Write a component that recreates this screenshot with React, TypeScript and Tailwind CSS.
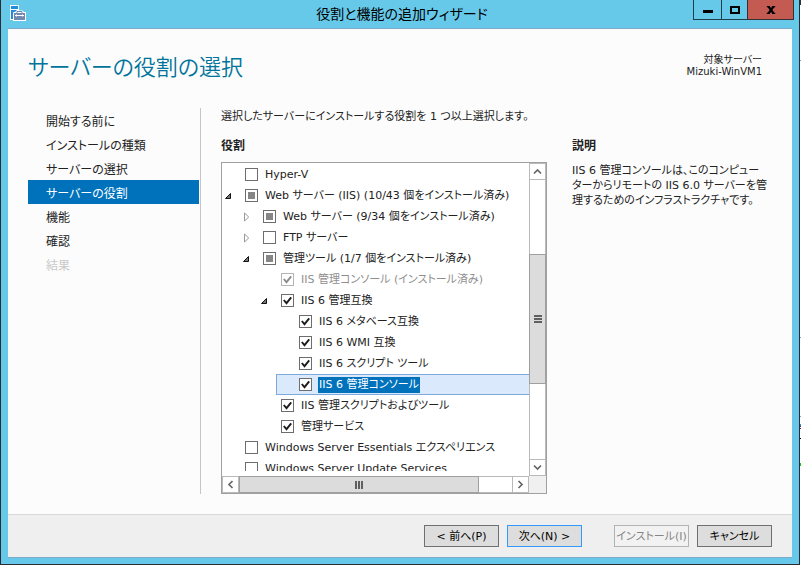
import { ReactNode } from "react";
import { clsx } from "clsx";

type CheckState = "on" | "off" | "partial";

interface Role {
  id: string;
  label: string;
  state: CheckState;
  open?: boolean;
  disabled?: boolean;
  selected?: boolean;
  children?: Role[];
}

const steps = [
  { label: "開始する前に" },
  { label: "インストールの種類" },
  { label: "サーバーの選択" },
  { label: "サーバーの役割", active: true },
  { label: "機能" },
  { label: "確認" },
  { label: "結果", disabled: true },
];

const roles: Role[] = [
  { id: "hyper-v", label: "Hyper-V", state: "off" },
  {
    id: "iis",
    label: "Web サーバー (IIS) (10/43 個をインストール済み)",
    state: "partial",
    open: true,
    children: [
      { id: "web", label: "Web サーバー (9/34 個をインストール済み)", state: "partial", open: false },
      { id: "ftp", label: "FTP サーバー", state: "off", open: false },
      {
        id: "tools",
        label: "管理ツール (1/7 個をインストール済み)",
        state: "partial",
        open: true,
        children: [
          { id: "console", label: "IIS 管理コンソール (インストール済み)", state: "on", disabled: true },
          {
            id: "iis6",
            label: "IIS 6 管理互換",
            state: "on",
            open: true,
            children: [
              { id: "metabase", label: "IIS 6 メタベース互換", state: "on" },
              { id: "wmi", label: "IIS 6 WMI 互換", state: "on" },
              { id: "script", label: "IIS 6 スクリプト ツール", state: "on" },
              { id: "iis6-console", label: "IIS 6 管理コンソール", state: "on", selected: true },
            ],
          },
          { id: "script-tools", label: "IIS 管理スクリプトおよびツール", state: "on" },
          { id: "service", label: "管理サービス", state: "on" },
        ],
      },
    ],
  },
  { id: "essentials", label: "Windows Server Essentials エクスペリエンス", state: "off" },
  { id: "wsus", label: "Windows Server Update Services", state: "off" },
];

const AppIcon = () => (
  <svg className="h-4 w-4" viewBox="0 0 16 16" aria-hidden="true">
    <path d="M0 0h9v5.500h3.500l1.500 1.500h2v9H3v-1H0z" fill="#fff" />
    <path d="M1 1h7v3H1zM1 5h6L5.500 6.500 3 7.500V14H1z" fill="#1e8fe0" />
    <path d="M4 8h11v7H4z" fill="#7389ae" />
    <path d="M7 8V6.500h5V8" fill="none" stroke="#7389ae" />
    <path d="M5 10.500h9" stroke="#fff" />
    <path d="M6.500 9.500v2M12.500 9.500v2" stroke="#fff" />
  </svg>
);

const Expander = ({ open, label }: { open: boolean; label: string }) => (
  <button type="button" aria-label={label} aria-expanded={open} className="ml-px h-4 w-3">
    {open ? (
      <svg className="h-4 w-3" viewBox="0 0 12 16" aria-hidden="true">
        <path d="M7.500 5.500v5h-5z" fill="#777" stroke="#111" strokeLinejoin="round" />
      </svg>
    ) : (
      <svg className="h-4 w-3" viewBox="0 0 12 16" aria-hidden="true">
        <path d="M3.500 4v8l4.200-4z" fill="#fff" stroke="#999" />
      </svg>
    )}
  </button>
);

const Tick = ({ role }: { role: Role }) => (
  <span className="relative flex">
    <input
      id={role.id}
      type="checkbox"
      defaultChecked={role.state === "on"}
      disabled={role.disabled}
      aria-checked={role.state === "partial" ? "mixed" : role.state === "on"}
      className={clsx(
        "h-[13px] w-[13px] appearance-none border bg-white",
        role.disabled ? "border-[#b5b5b5]" : "border-[#6d6d6d]"
      )}
    />
    {role.state === "partial" && (
      <span className="pointer-events-none absolute inset-[3px] bg-[#868686]" />
    )}
    {role.state === "on" && (
      <svg className="pointer-events-none absolute inset-0" viewBox="0 0 13 13" aria-hidden="true">
        <path
          d="M2.800 6l2.700 3.200L10.200 3.400"
          fill="none"
          stroke={role.disabled ? "#8c8c8c" : "#1c1c1c"}
          strokeWidth="1.900"
        />
      </svg>
    )}
  </span>
);

const RoleList = ({ items, nested }: { items: Role[]; nested?: boolean }) => (
  <ul className={clsx(nested && "pl-[18px]")}>
    {items.map((role) => (
      <li key={role.id}>
        <div
          className={clsx(
            "flex h-[21px] items-center",
            role.selected && "border-y border-l border-[#7da9dc] bg-[#dbe9fd]"
          )}
        >
          <span className={clsx("flex shrink-0", role.selected ? "w-[22px]" : "w-[23px]")}>
            {role.open !== undefined && <Expander open={role.open} label={role.label} />}
          </span>
          <Tick role={role} />
          <label
            htmlFor={role.id}
            className={clsx(
              "ml-[6px] px-px leading-4 whitespace-nowrap",
              role.selected && "bg-[#0072bc] text-white",
              role.disabled && "text-[#8f8f8f]"
            )}
          >
            {role.label}
          </label>
        </div>
        {role.children && <RoleList items={role.children} nested />}
      </li>
    ))}
  </ul>
);

const ScrollButton = ({ label, path }: { label: string; path: string }) => (
  <button
    type="button"
    aria-label={label}
    className="flex h-[17px] w-[17px] shrink-0 items-center justify-center border border-[#b9b9b9] bg-white"
  >
    <svg className="h-[9px] w-[9px]" viewBox="0 0 9 9" aria-hidden="true">
      <path d={path} fill="none" stroke="#666" strokeWidth="1.700" />
    </svg>
  </button>
);

const FooterButton = ({
  children,
  primary,
  disabled,
}: {
  children: ReactNode;
  primary?: boolean;
  disabled?: boolean;
}) => (
  <button
    type="button"
    disabled={disabled}
    className={clsx(
      "h-[22px] w-[75px] border pt-px text-[11px] leading-5 whitespace-nowrap",
      disabled
        ? "border-[#b0b4b6] bg-[#f2f2f2] text-[#858585]"
        : primary
          ? "border-[#3399ff] bg-[#dddddd] text-black"
          : "border-[#707070] bg-[#dddddd] text-black"
    )}
  >
    {children}
  </button>
);

const TitleBar = () => (
  <header className="flex h-7 shrink-0">
    <div className="flex flex-1 pt-[5px] pl-[9px]">
      <AppIcon />
    </div>
    <h1 className="text-sm leading-7 text-black">役割と機能の追加ウィザード</h1>
    <div className="flex flex-1 items-start justify-end pr-[5px]">
      <button
        type="button"
        aria-label="最小化"
        className="flex h-5 w-[29px] items-center justify-center border border-t-0 border-[#1f3f4c]"
      >
        <span className="mt-1 h-[3px] w-[10px] bg-black" />
      </button>
      <button
        type="button"
        aria-label="最大化"
        className="flex h-5 w-[25px] items-center justify-center border-b border-[#1f3f4c]"
      >
        <span className="h-2 w-[10px] border-2 border-black" />
      </button>
      <button
        type="button"
        aria-label="閉じる"
        className="flex h-5 w-[47px] items-center justify-center border border-t-0 border-[#3a3034] bg-[#c35b52]"
      >
        <svg className="h-2 w-[10px]" viewBox="0 0 10 8" aria-hidden="true">
          <path d="M2.200 0l5.600 8M7.800 0L2.200 8" stroke="#000" strokeWidth="2.200" />
          <path d="M.8 .6h3M6.200 .6h3M.8 7.400h3M6.200 7.400h3" stroke="#000" strokeWidth="1.200" />
        </svg>
      </button>
    </div>
  </header>
);

export default function App() {
  return (
    <div className="flex h-screen bg-white font-['DejaVu_Sans','Noto_Sans_CJK_JP',sans-serif] text-[11px] text-[#222] [font-feature-settings:'palt']">
      <div className="flex min-w-0 flex-1 flex-col border-x border-b border-[#2b2b33] bg-[#67c9ea]">
        <TitleBar />

        <main className="mx-[7px] mb-[6px] flex min-h-0 flex-1 flex-col border-y border-[#7fa9c9] bg-[#fcfcfc]">
          <div className="flex h-[79px] shrink-0 justify-between pr-[30px] pl-5">
            <h2 className="pt-[21px] text-[22px] leading-9 font-[350] text-[#00749c]">
              サーバーの役割の選択
            </h2>
            <p className="pt-[25px] text-right text-[10px] leading-3">
              対象サーバー
              <br />
              Mizuki-WinVM1
            </p>
          </div>

          <div className="flex min-h-0 flex-1 pr-7 pb-5 pl-5">
            <nav className="w-[173px] shrink-0 border-r border-[#c6c6c6] pr-px text-xs leading-6">
              {steps.map((step) => (
                <a
                  key={step.label}
                  href="#"
                  className={clsx(
                    "block h-6 pt-[2px] pl-[18px]",
                    step.active && "bg-[#0072bc] text-white",
                    step.disabled && "text-[#c9c9c9]"
                  )}
                >
                  {step.label}
                </a>
              ))}
            </nav>

            <section className="ml-5 flex min-w-0 flex-1 flex-col">
              <p className="pt-px leading-4">選択したサーバーにインストールする役割を 1 つ以上選択します。</p>
              <h3 className="mt-[13px] mb-2 text-xs leading-4 font-bold">役割</h3>

              <div className="flex min-h-0 flex-1 flex-col border border-[#a0a0a0] bg-white">
                <div className="flex min-h-0 flex-1">
                  <div className="mt-px mb-[5px] min-w-0 flex-1 overflow-hidden">
                    <RoleList items={roles} />
                  </div>
                  <div className="flex flex-col border-x border-[#b9b9b9]">
                    <div className="-mx-px flex flex-1 flex-col">
                      <ScrollButton label="上へ" path="M1 6.500L4.500 3 8 6.500" />
                      <div className="flex flex-1 flex-col">
                        <div className="flex-[74]" />
                        <div className="flex flex-[128] flex-col items-center justify-center gap-px border border-[#a0a0a0] bg-[#dcdcdc]">
                          <span className="h-[2px] w-2 bg-[#606060]" />
                          <span className="h-[2px] w-2 bg-[#606060]" />
                          <span className="h-[2px] w-2 bg-[#606060]" />
                        </div>
                        <div className="flex-[75]" />
                      </div>
                      <ScrollButton label="下へ" path="M1 2.500L4.500 6 8 2.500" />
                    </div>
                  </div>
                </div>
                <div className="flex bg-[#f0f0f0] pr-[17px]">
                  <ScrollButton label="左へ" path="M6.500 1L3 4.500 6.500 8" />
                  <div className="flex flex-1 border-y border-[#b9b9b9] bg-white">
                    <div className="-my-px flex flex-[240] items-center justify-center gap-px border border-[#a0a0a0] bg-[#dcdcdc]">
                      <span className="h-2 w-[2px] bg-[#606060]" />
                      <span className="h-2 w-[2px] bg-[#606060]" />
                      <span className="h-2 w-[2px] bg-[#606060]" />
                    </div>
                    <div className="flex-[33]" />
                  </div>
                  <ScrollButton label="右へ" path="M2.500 1L6 4.500 2.500 8" />
                </div>
              </div>
            </section>

            <aside className="ml-[25px] w-[192px] shrink-0 pt-[30px]">
              <h3 className="text-xs leading-4 font-bold">説明</h3>
              <p className="mt-[9px] leading-[15px] whitespace-nowrap">
                IIS 6 管理コンソールは、このコンピュー
                <br />
                ターからリモートの IIS 6.0 サーバーを管
                <br />
                理するためのインフラストラクチャです。
              </p>
            </aside>
          </div>

          <footer className="flex h-[43px] shrink-0 items-center justify-end border-t border-[#d9d9d9] bg-[#efefef] pr-5">
            <FooterButton>{"< 前へ(P)"}</FooterButton>
            <div className="ml-2">
              <FooterButton primary>{"次へ(N) >"}</FooterButton>
            </div>
            <div className="ml-8">
              <FooterButton disabled>インストール(I)</FooterButton>
            </div>
            <div className="ml-2">
              <FooterButton>キャンセル</FooterButton>
            </div>
          </footer>
        </main>
      </div>

      {/* sliver of the desktop behind the window */}
      <svg className="h-full w-px shrink-0" viewBox="0 0 1 565" preserveAspectRatio="none" aria-hidden="true">
        <path d="M0 0h1v5H0z" fill="#333" />
        <path d="M0 60h1v1H0zM0 337h1v1H0zM0 416h1v1H0z" fill="#999" />
        <path d="M0 424h1v2H0z" fill="#3b8fc4" />
        <path d="M0 426h1v1H0zM0 428h1v1H0z" fill="#7a1030" />
        <path d="M0 438h1v1H0z" fill="#000" />
        <path d="M0 463h1v3H0z" fill="#18c018" />
      </svg>
    </div>
  );
}
